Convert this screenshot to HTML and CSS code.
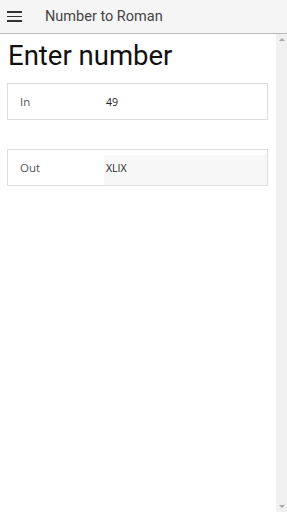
FILE: index.html
```html
<!DOCTYPE html>
<html lang="en">
<head>
    <meta charset="UTF-8">
    <meta name="viewport" content="width=device-width, initial-scale=1.0">
    <title>Number to Roman</title>
    <link rel="stylesheet" href="styles.css">
</head>
<body>
    <header class="topbar">
        <div class="menu-icon">
            <span></span><span></span><span></span>
        </div>
        <div class="topbar-title">Number to Roman</div>
    </header>

    <div class="body-wrap">
        <main class="page">
            <h1>Enter number</h1>

            <div class="field">
                <div class="field-label">In</div>
                <div class="field-value">49</div>
            </div>

            <div class="field field-out">
                <div class="field-label">Out</div>
                <div class="field-value">XLIX</div>
            </div>
        </main>

        <div class="scrollbar">
            <span class="arrow arrow-up"></span>
            <span class="arrow arrow-down"></span>
        </div>
    </div>
</body>
</html>
```

FILE: styles.css
```css
html, body {
    margin: 0;
    padding: 0;
    height: 100%;
}

body {
    font-family: Roboto, "Open Sans", sans-serif;
    background-color: #ffffff;
    display: flex;
    flex-direction: column;
    overflow: hidden;
}

.topbar {
    height: 33px;
    flex: none;
    display: flex;
    align-items: center;
    background-color: #f5f5f5;
    border-bottom: 1px solid #b8b8b8;
}

.menu-icon {
    width: 15px;
    margin-left: 7px;
    display: flex;
    flex-direction: column;
    gap: 3px;
}

.menu-icon span {
    display: block;
    height: 1.5px;
    background-color: #333;
}

.topbar-title {
    margin-left: 23px;
    font-size: 14.5px;
    color: #444;
}

.body-wrap {
    flex: 1;
    display: flex;
    min-height: 0;
}

.page {
    flex: 1;
    padding: 0 8px 0 7px;
}

.scrollbar {
    width: 11px;
    background-color: #f0f0f0;
    display: flex;
    flex-direction: column;
    justify-content: space-between;
    align-items: center;
    padding: 4px 0;
}

.arrow {
    width: 0;
    height: 0;
    border-left: 3px solid transparent;
    border-right: 3px solid transparent;
}

.arrow-up {
    border-bottom: 3px solid #a8a8a8;
}

.arrow-down {
    border-top: 3px solid #a8a8a8;
}

h1 {
    margin: 6px 0 12px 1px;
    font-size: 27.5px;
    font-weight: normal;
    color: #111;
    line-height: 31px;
}

.field {
    display: flex;
    align-items: stretch;
    height: 35px;
    border: 1px solid #dcdcdc;
    margin-bottom: 29px;
    font-family: "Open Sans", sans-serif;
}

.field-label {
    width: 84px;
    padding-left: 12px;
    display: flex;
    align-items: center;
    font-size: 11.5px;
    color: #555;
}

.field-value {
    flex: 1;
    display: flex;
    align-items: center;
    padding-left: 2px;
    font-size: 10.5px;
    color: #222;
}

.field-out .field-value {
    background-color: #f7f7f7;
    margin-top: 5px;
    padding-bottom: 5px;
}
```
